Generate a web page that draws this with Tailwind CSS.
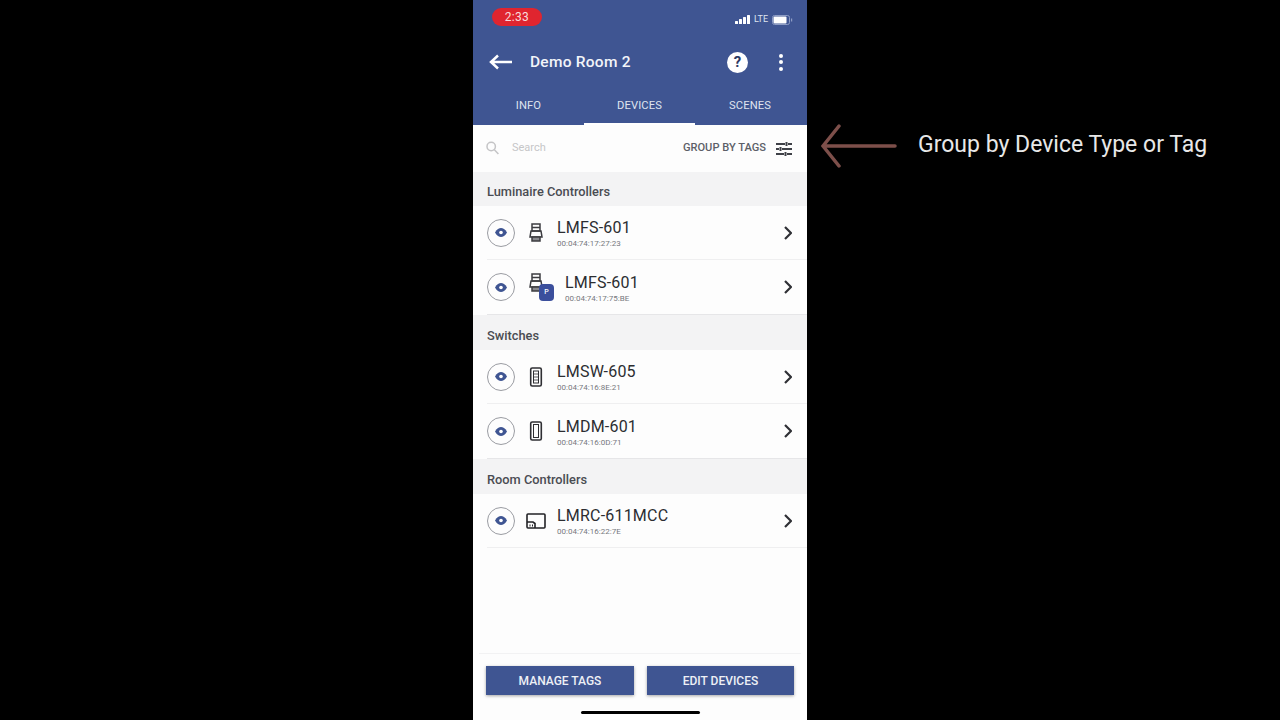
<!DOCTYPE html>
<html lang="en">
<head>
    <meta charset="UTF-8">
    <meta name="viewport" content="width=device-width, initial-scale=1.0">
    <title>Demo Room 2</title>
    <script src="https://cdn.jsdelivr.net/npm/@tailwindcss/browser@4"></script>
</head>
<body class="bg-black h-[720px] w-[1280px] overflow-hidden relative font-['Roboto',sans-serif]">
    <!-- Phone -->
    <div class="w-[334px] h-[720px] ml-[473px] bg-[#fdfdfd] flex flex-col relative">
        <!-- Header -->
        <header class="h-[125px] bg-[#3f5592] text-white flex flex-col shrink-0">
            <div class="h-[36px] flex items-center justify-between pl-[19px] pr-[14px]">
                <div class="w-[50px] h-[18px] mt-[-2px] rounded-full bg-[#e0252f] text-[#f8dcdc] text-[12px] leading-[18px] text-center tracking-[0.3px]">2:33</div>
                <div class="flex items-center gap-[3px] mt-[3px]">
                    <svg width="16" height="9" viewBox="0 0 16 9" class="fill-white">
                        <rect x="0" y="6" width="3" height="3" rx="0.5"/>
                        <rect x="4" y="4" width="3" height="5" rx="0.5"/>
                        <rect x="8" y="2" width="3" height="7" rx="0.5"/>
                        <rect x="12" y="0" width="3" height="9" rx="0.5"/>
                    </svg>
                    <span class="text-[9px] leading-none text-[#dfe4f0]">LTE</span>
                    <svg width="21" height="10" viewBox="0 0 21 10" class="ml-[1px]">
                        <rect x="0.5" y="0.5" width="17" height="9" rx="2" fill="none" stroke="#8d9cc4"/>
                        <rect x="1.5" y="1.5" width="13" height="7" rx="1" fill="#fff"/>
                        <rect x="19" y="3.5" width="1.2" height="3" fill="#8d9cc4"/>
                    </svg>
                </div>
            </div>
            <div class="h-[52px] flex items-center pl-[16px] pr-[24px]">
                <svg width="24" height="16" viewBox="0 0 24 16" fill="none" stroke="#fff" stroke-width="2.5">
                    <path d="M23 8H2M9 1.500 2 8l7 6.500"/>
                </svg>
                <span class="ml-[17px] mt-[2px] text-[15.500px] font-medium text-[#f2f4f9] tracking-[0.25px]">Demo Room 2</span>
                <div class="ml-auto w-[21px] h-[21px] rounded-full bg-white text-[#2c3a63] text-[15px] font-bold leading-[21px] text-center">?</div>
                <div class="ml-[31px] flex flex-col gap-[2.500px]">
                    <span class="w-[4px] h-[4px] rounded-full bg-white"></span>
                    <span class="w-[4px] h-[4px] rounded-full bg-white"></span>
                    <span class="w-[4px] h-[4px] rounded-full bg-white"></span>
                </div>
            </div>
            <nav class="flex-1 grid grid-cols-[111px_111px_110px] text-[11.200px] text-[#dfe3ef] tracking-[0.1px]">
                <div class="flex items-center justify-center">INFO</div>
                <div class="flex items-center justify-center pt-[1px] border-b-[2px] border-white">DEVICES</div>
                <div class="flex items-center justify-center">SCENES</div>
            </nav>
        </header>

        <!-- Search -->
        <div class="h-[47px] flex items-center pl-[13px] pr-[15px] shrink-0">
            <svg width="13" height="14" viewBox="0 0 13 14" class="mt-[-2px]" fill="none" stroke="#c4c4c6" stroke-width="1.500">
                <circle cx="5.200" cy="5.500" r="4.200"/>
                <path d="m8.400 8.800 4 4.200"/>
            </svg>
            <span class="ml-[13px] text-[11px] text-[#c6c6c8]">Search</span>
            <span class="ml-auto text-[11.100px] text-[#5c5f68] font-medium">GROUP BY TAGS</span>
            <svg width="16" height="14" viewBox="0 0 16 14" class="ml-[10px]" fill="none" stroke="#3f4147" stroke-width="2">
                <path d="M0 2h9M12 2h4M10.500 0v4M0 7h3M6 7h10M4.500 5v4M0 12h8M11 12h5M9.500 10v4"/>
            </svg>
        </div>

        <!-- Luminaire Controllers -->
        <div class="h-[34px] bg-[#f3f3f4] pl-[14px] pt-[6px] flex items-center text-[12.800px] font-medium text-[#4a4c52] shrink-0">Luminaire Controllers</div>
        <div class="h-[54px] flex items-center ml-[14px] border-b border-[#efeff0] pr-[14px] shrink-0">
            <div class="w-[28px] h-[28px] rounded-full border border-[#9a9ca2] flex items-center justify-center">
                <svg width="12" height="9" viewBox="0 0 12 9"><path d="M0 4.500C2 1 4 0 6 0s4 1 6 4.500C10 8 8 9 6 9S2 8 0 4.500Z" fill="#3f5592"/><circle cx="6" cy="4.500" r="1.800" fill="#fff"/></svg>
            </div>
            <svg width="14" height="20" viewBox="0 0 14 20" class="ml-[14px]" fill="none" stroke="#3c3c40" stroke-width="1.500">
                <rect x="3" y="1" width="8" height="7"/><path d="M3 4.500h8M2 8h10l1 6H1Z"/><path d="M3 14h8v4H3Z" fill="#8a8a8e"/>
            </svg>
            <div class="ml-[14px] mt-[1px]">
                <div class="text-[16px] leading-[17px] text-[#2c2d31] tracking-[0.2px]">LMFS-601</div>
                <div class="text-[8px] leading-[9px] mt-[3px] text-[#77787d]">00:04:74:17:27:23</div>
            </div>
            <svg width="8" height="14" viewBox="0 0 8 14" class="ml-auto mr-[1px]" fill="none" stroke="#2f3035" stroke-width="2.200"><path d="m1 1 6 6-6 6"/></svg>
        </div>
        <div class="h-[55px] flex items-center ml-[14px] border-b border-[#e6e6e8] pr-[14px] shrink-0">
            <div class="w-[28px] h-[28px] rounded-full border border-[#9a9ca2] flex items-center justify-center">
                <svg width="12" height="9" viewBox="0 0 12 9"><path d="M0 4.500C2 1 4 0 6 0s4 1 6 4.500C10 8 8 9 6 9S2 8 0 4.500Z" fill="#3f5592"/><circle cx="6" cy="4.500" r="1.800" fill="#fff"/></svg>
            </div>
            <div class="relative ml-[14px] w-[14px] h-[20px] mt-[-8px]">
                <svg width="14" height="20" viewBox="0 0 14 20" fill="none" stroke="#3c3c40" stroke-width="1.500">
                    <rect x="3" y="1" width="8" height="7"/><path d="M3 4.500h8M2 8h10l1 6H1Z"/><path d="M3 14h8v4H3Z" fill="#8a8a8e"/>
                </svg>
                <div class="absolute left-[10px] top-[11px] w-[15px] h-[17px] rounded-[4px] bg-[#3b4f9c] text-white text-[7px] leading-[17px] text-center font-medium">P</div>
            </div>
            <div class="ml-[22px] mt-[3px]">
                <div class="text-[16px] leading-[17px] text-[#2c2d31] tracking-[0.2px]">LMFS-601</div>
                <div class="text-[8px] leading-[9px] mt-[3px] text-[#77787d]">00:04:74:17:75:BE</div>
            </div>
            <svg width="8" height="14" viewBox="0 0 8 14" class="ml-auto mr-[1px]" fill="none" stroke="#2f3035" stroke-width="2.200"><path d="m1 1 6 6-6 6"/></svg>
        </div>

        <!-- Switches -->
        <div class="h-[35px] bg-[#f3f3f4] pl-[14px] pt-[6px] flex items-center text-[12.800px] font-medium text-[#4a4c52] shrink-0">Switches</div>
        <div class="h-[54px] flex items-center ml-[14px] border-b border-[#efeff0] pr-[14px] shrink-0">
            <div class="w-[28px] h-[28px] rounded-full border border-[#9a9ca2] flex items-center justify-center">
                <svg width="12" height="9" viewBox="0 0 12 9"><path d="M0 4.500C2 1 4 0 6 0s4 1 6 4.500C10 8 8 9 6 9S2 8 0 4.500Z" fill="#3f5592"/><circle cx="6" cy="4.500" r="1.800" fill="#fff"/></svg>
            </div>
            <svg width="14" height="20" viewBox="0 0 14 20" class="ml-[14px]" fill="none" stroke="#2f2f33" stroke-width="1.600">
                <rect x="1.700" y="1" width="10.600" height="18" rx="1.500"/><rect x="4.500" y="4" width="5" height="12" stroke-width="1"/><path d="M4.500 7h5M4.500 10h5M4.500 13h5" stroke-width="0.800"/>
            </svg>
            <div class="ml-[14px] mt-[1px]">
                <div class="text-[16px] leading-[17px] text-[#2c2d31] tracking-[0.2px]">LMSW-605</div>
                <div class="text-[8px] leading-[9px] mt-[3px] text-[#77787d]">00:04:74:16:8E:21</div>
            </div>
            <svg width="8" height="14" viewBox="0 0 8 14" class="ml-auto mr-[1px]" fill="none" stroke="#2f3035" stroke-width="2.200"><path d="m1 1 6 6-6 6"/></svg>
        </div>
        <div class="h-[55px] flex items-center ml-[14px] border-b border-[#e6e6e8] pr-[14px] shrink-0">
            <div class="w-[28px] h-[28px] rounded-full border border-[#9a9ca2] flex items-center justify-center">
                <svg width="12" height="9" viewBox="0 0 12 9"><path d="M0 4.500C2 1 4 0 6 0s4 1 6 4.500C10 8 8 9 6 9S2 8 0 4.500Z" fill="#3f5592"/><circle cx="6" cy="4.500" r="1.800" fill="#fff"/></svg>
            </div>
            <svg width="14" height="20" viewBox="0 0 14 20" class="ml-[14px]" fill="none" stroke="#2f2f33" stroke-width="1.600">
                <rect x="1.700" y="1" width="10.600" height="18" rx="1.500"/><rect x="4.500" y="3.500" width="5" height="13" stroke-width="1"/>
            </svg>
            <div class="ml-[14px] mt-[3px]">
                <div class="text-[16px] leading-[17px] text-[#2c2d31] tracking-[0.2px]">LMDM-601</div>
                <div class="text-[8px] leading-[9px] mt-[3px] text-[#77787d]">00:04:74:16:0D:71</div>
            </div>
            <svg width="8" height="14" viewBox="0 0 8 14" class="ml-auto mr-[1px]" fill="none" stroke="#2f3035" stroke-width="2.200"><path d="m1 1 6 6-6 6"/></svg>
        </div>

        <!-- Room Controllers -->
        <div class="h-[35px] bg-[#f3f3f4] pl-[14px] pt-[6px] flex items-center text-[12.800px] font-medium text-[#4a4c52] shrink-0">Room Controllers</div>
        <div class="h-[54px] flex items-center ml-[14px] border-b border-[#efeff0] pr-[14px] shrink-0">
            <div class="w-[28px] h-[28px] rounded-full border border-[#9a9ca2] flex items-center justify-center">
                <svg width="12" height="9" viewBox="0 0 12 9"><path d="M0 4.500C2 1 4 0 6 0s4 1 6 4.500C10 8 8 9 6 9S2 8 0 4.500Z" fill="#3f5592"/><circle cx="6" cy="4.500" r="1.800" fill="#fff"/></svg>
            </div>
            <svg width="20" height="16" viewBox="0 0 20 16" class="ml-[11px]" fill="none" stroke="#222226" stroke-width="1.600">
                <rect x="1" y="1" width="18" height="14" rx="1"/><path d="M1 9h6l2 1.500V15"/><path d="M3.500 12.500h1M6 12.500h1" stroke-width="1.800"/>
            </svg>
            <div class="ml-[11px] mt-[1px]">
                <div class="text-[16px] leading-[17px] text-[#2c2d31] tracking-[0.2px]">LMRC-611MCC</div>
                <div class="text-[8px] leading-[9px] mt-[3px] text-[#77787d]">00:04:74:16:22:7E</div>
            </div>
            <svg width="8" height="14" viewBox="0 0 8 14" class="ml-auto mr-[1px]" fill="none" stroke="#2f3035" stroke-width="2.200"><path d="m1 1 6 6-6 6"/></svg>
        </div>

        <!-- Bottom buttons -->
        <div class="mt-auto mx-[6px] border-t border-[#f2f2f3] pt-[12px] px-[7px] flex justify-between shrink-0">
            <button class="w-[148px] h-[29px] bg-[#3f5592] text-[#eef0f6] text-[12px] font-medium shadow-[0_1px_3px_rgba(0,0,0,0.35)]">MANAGE TAGS</button>
            <button class="w-[147px] h-[29px] bg-[#3f5592] text-[#eef0f6] text-[12px] font-medium shadow-[0_1px_3px_rgba(0,0,0,0.35)]">EDIT DEVICES</button>
        </div>
        <div class="h-[25px] flex items-end justify-center pb-[6px] shrink-0">
            <div class="w-[119px] h-[3px] rounded-full bg-black"></div>
        </div>
    </div>

    <!-- Annotation -->
    <svg width="76" height="46" viewBox="0 0 76 46" class="absolute left-[821px] top-[123px]" fill="none" stroke="#7d4f4a" stroke-width="3.500" stroke-linecap="round">
        <path d="M74 23H2M18 3 2 23l16 20"/>
    </svg>
    <div class="absolute left-[918px] top-[131px] text-[23px] leading-[28px] text-[#e8e8e8] whitespace-nowrap">Group by Device Type or Tag</div>
</body>
</html>
